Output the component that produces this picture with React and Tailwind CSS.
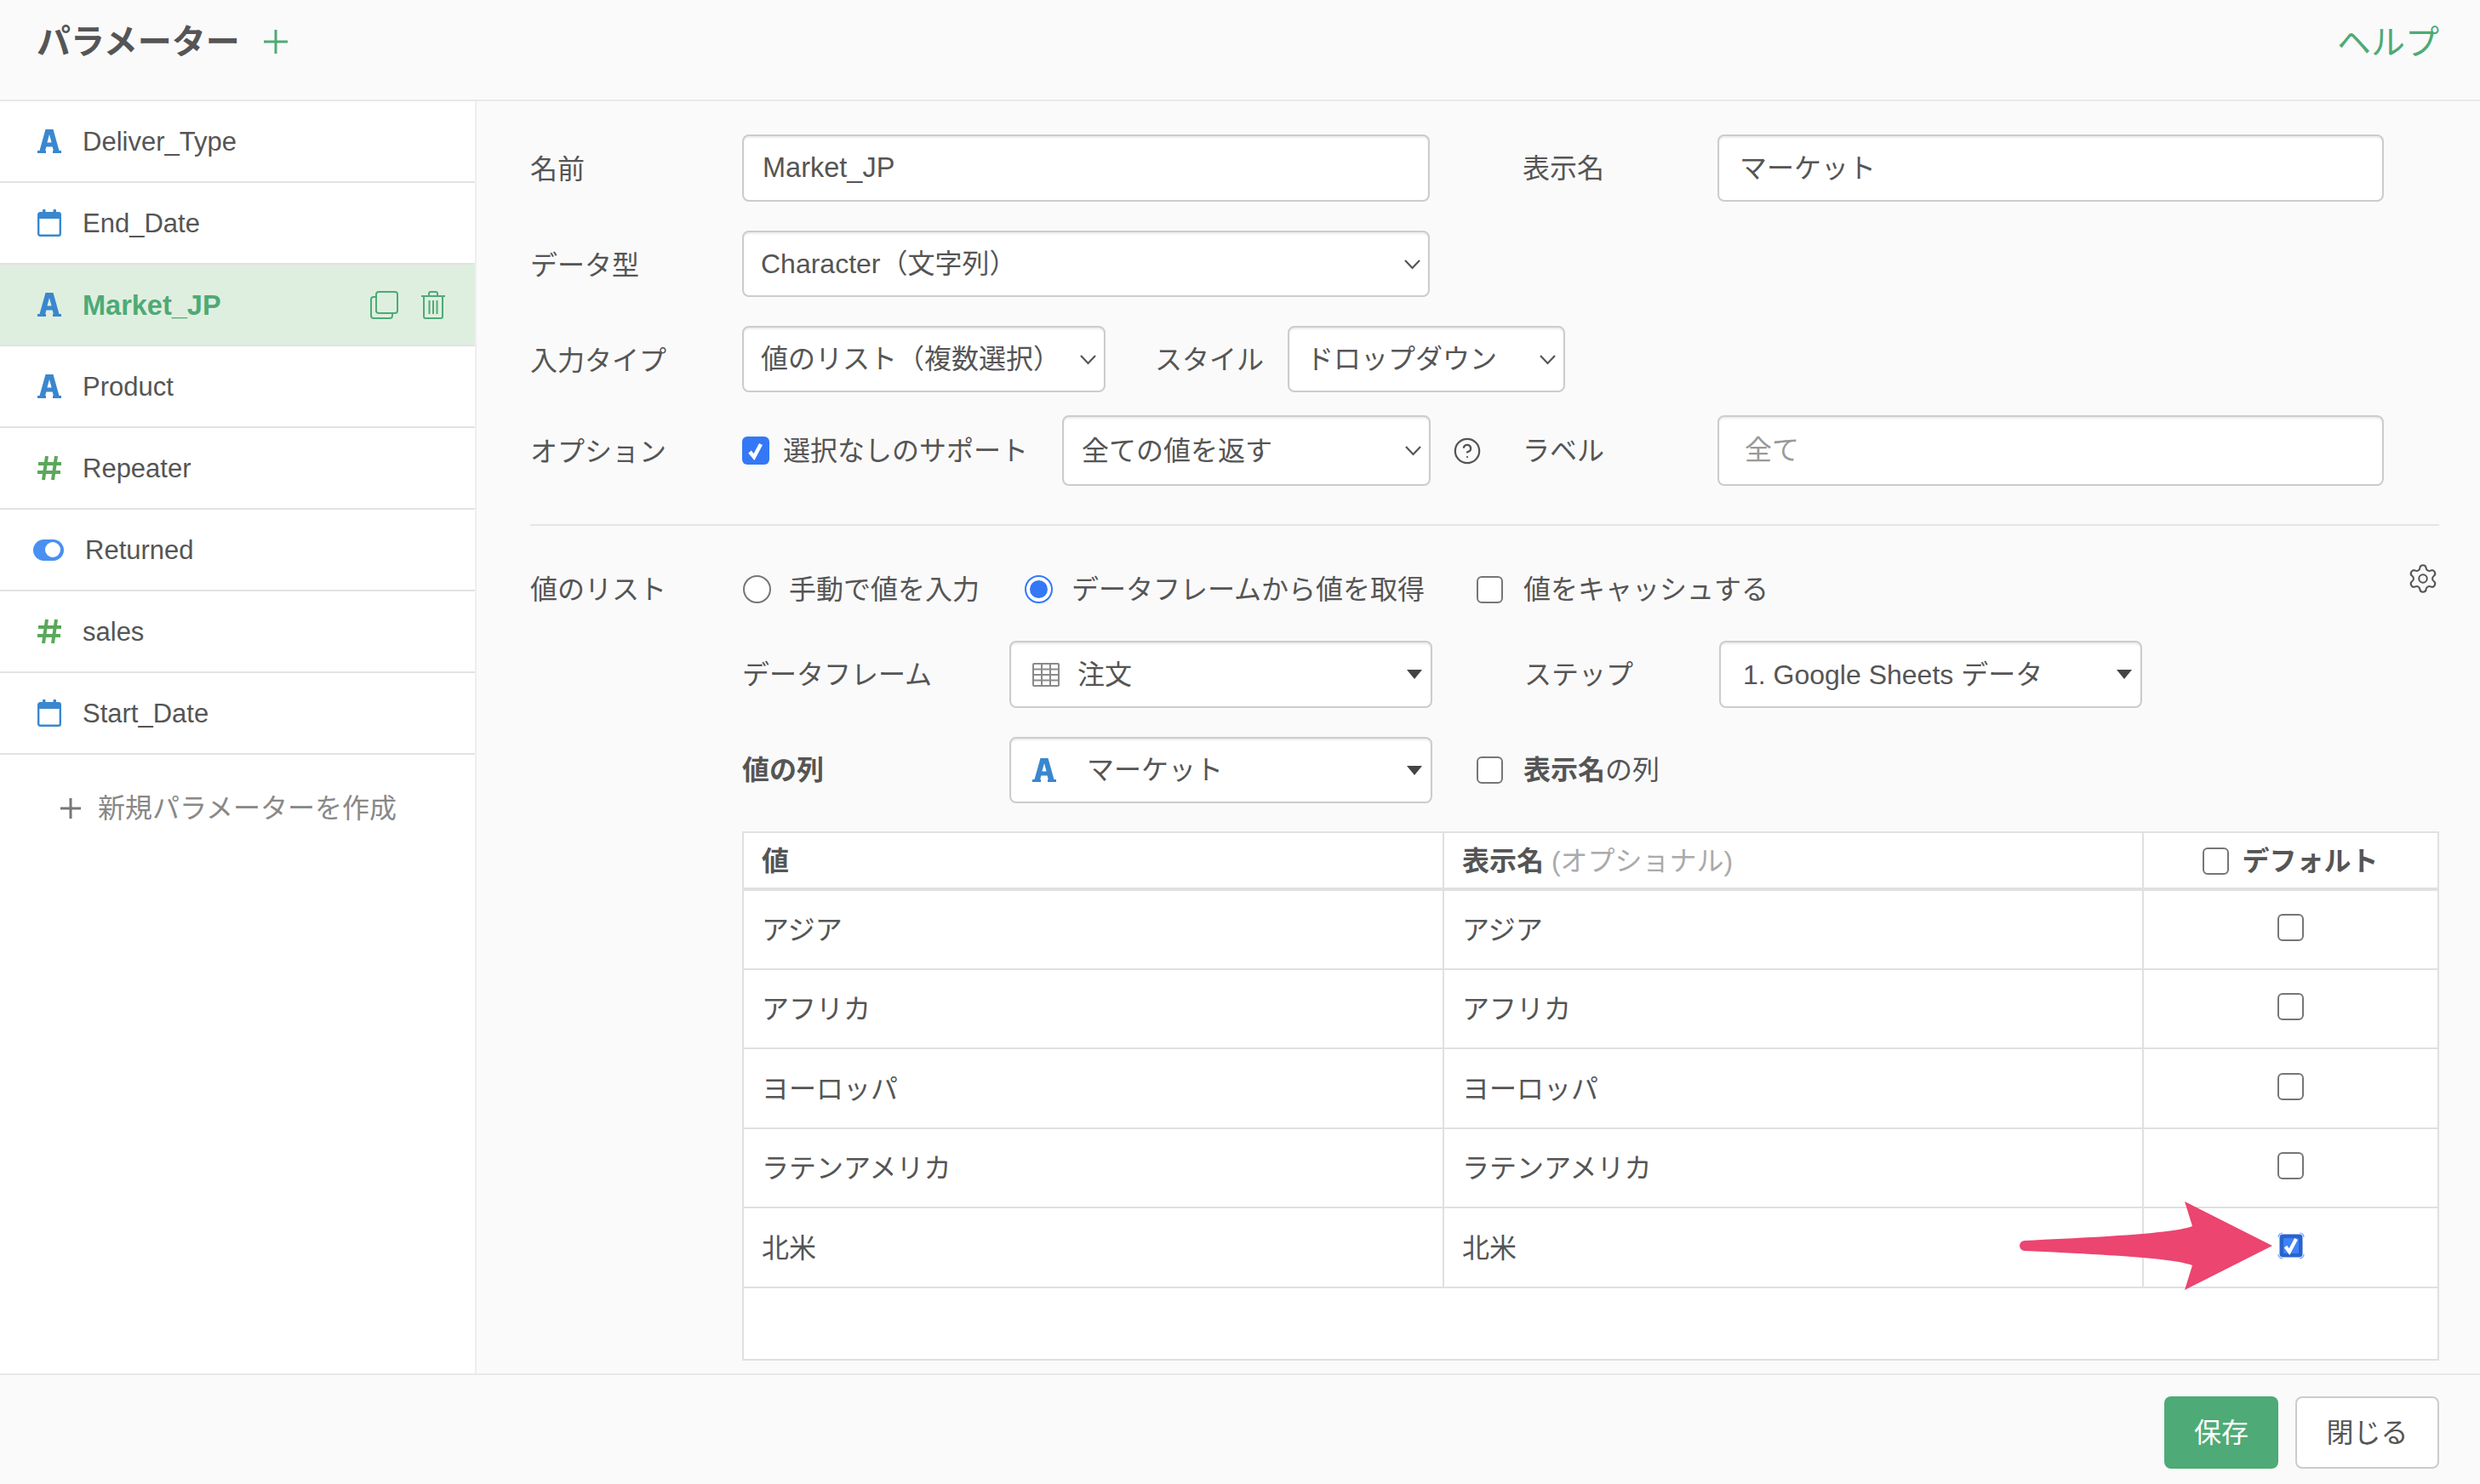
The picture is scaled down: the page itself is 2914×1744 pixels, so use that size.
import { Settings, CircleHelp } from 'lucide-react'

const params = [
  { name: 'Deliver_Type', type: 'text' },
  { name: 'End_Date', type: 'date' },
  { name: 'Market_JP', type: 'text', active: true },
  { name: 'Product', type: 'text' },
  { name: 'Repeater', type: 'num' },
  { name: 'Returned', type: 'bool' },
  { name: 'sales', type: 'num' },
  { name: 'Start_Date', type: 'date' },
]

const rows = ['アジア', 'アフリカ', 'ヨーロッパ', 'ラテンアメリカ', '北米']

function TextIcon({ className = '' }) {
  return (
    <svg width="28" height="28" viewBox="0 0 28 28" className={`shrink-0 ${className}`}>
      <path
        fillRule="evenodd"
        fill="#3a87cf"
        d="M9.500 0H18.500L25.500 25H28V28H18V25H18.800L17.600 20.500H10.400L9.200 25H10V28H0V25H2.500ZM14 6L11.400 15.500H16.600Z"
      />
    </svg>
  )
}

function DateIcon() {
  return (
    <svg width="28" height="32" viewBox="0 0 28 32" className="shrink-0">
      <rect x="1.200" y="4.200" width="25.600" height="26.600" rx="2" fill="none" stroke="#3a87cf" strokeWidth="2.400" />
      <rect x="1" y="4" width="26" height="7" fill="#3a87cf" />
      <rect x="6" y="0" width="3.500" height="6" rx="1" fill="#3a87cf" />
      <rect x="18.500" y="0" width="3.500" height="6" rx="1" fill="#3a87cf" />
    </svg>
  )
}

function NumIcon() {
  return (
    <svg width="28" height="30" viewBox="0 0 28 30" className="shrink-0">
      <g stroke="#5aa85a" strokeWidth="4" fill="none">
        <path d="M11 1L7 29" />
        <path d="M22 1L18 29" />
        <path d="M1 10H28" />
        <path d="M0 20H27" />
      </g>
    </svg>
  )
}

function BoolIcon() {
  return (
    <div className="w-[36px] h-[25px] rounded-full bg-[#4a90f0] flex items-center justify-end pr-[4px] shrink-0 -ml-[5px]">
      <div className="w-[18px] h-[18px] rounded-full bg-white" />
    </div>
  )
}

function CopyIcon() {
  return (
    <svg width="33" height="33" viewBox="0 0 33 33" fill="none" stroke="#4eaa76" strokeWidth="2">
      <rect x="7" y="1" width="25" height="25" rx="3" />
      <path d="M7 7H4a3 3 0 0 0-3 3v19a3 3 0 0 0 3 3h19a3 3 0 0 0 3-3v-3" />
    </svg>
  )
}

function TrashIcon() {
  return (
    <svg width="28" height="33" viewBox="0 0 28 33" fill="none" stroke="#4eaa76" strokeWidth="2">
      <path d="M0 6H28" />
      <path d="M9 6V3a2 2 0 0 1 2-2h6a2 2 0 0 1 2 2v3" />
      <path d="M3 6V30a2 2 0 0 0 2 2h18a2 2 0 0 0 2-2V6" />
      <path d="M9.500 11V27M14 11V27M18.500 11V27" />
    </svg>
  )
}

function TableIcon() {
  return (
    <svg width="32" height="28" viewBox="0 0 32 28" fill="none" stroke="#8a8a8a" strokeWidth="2" className="shrink-0">
      <rect x="1" y="1" width="30" height="26" rx="1" />
      <path d="M11 1V27M21 1V27M1 7.500H31M1 14H31M1 20.500H31" />
    </svg>
  )
}

function Chevron() {
  return (
    <svg width="21" height="13" viewBox="0 0 21 13" fill="none" stroke="#555" strokeWidth="2.200" className="shrink-0">
      <path d="M2 2L10.500 11L19 2" />
    </svg>
  )
}

function Caret() {
  return (
    <svg width="18" height="11" viewBox="0 0 18 11" className="shrink-0">
      <path d="M0 0H18L9 11Z" fill="#444" />
    </svg>
  )
}

function Check({ checked }) {
  if (checked) {
    return (
      <div className="w-[32px] h-[33px] rounded-[6px] bg-[#3478f6] flex items-center justify-center shrink-0">
        <svg width="20" height="22" viewBox="0 0 20 22" fill="none" stroke="#fff" strokeWidth="4.500">
          <path d="M3 12L8 18L16 3" />
        </svg>
      </div>
    )
  }
  return <div className="w-[31px] h-[32px] rounded-[6px] border-2 border-[#767676] bg-white shrink-0" />
}

function FocusedCheck() {
  return (
    <svg width="32" height="32" viewBox="0 0 32 32" fill="none">
      <path
        d="M1 6a5 5 0 0 1 5-5M26 1a5 5 0 0 1 5 5M31 26a5 5 0 0 1-5 5M6 31a5 5 0 0 1-5-5"
        stroke="#6aa5ff"
        strokeWidth="1.200"
      />
      <rect x="2.500" y="2.500" width="27" height="27" rx="4" fill="#2a63cc" />
      <rect x="7" y="7" width="18" height="18" rx="1" fill="#3f82fa" />
      <path d="M9.500 17L14 23L22 8" stroke="#fff" strokeWidth="4.200" />
    </svg>
  )
}

function Radio({ checked }) {
  return (
    <div
      className={`w-[33px] h-[33px] rounded-full border-2 flex items-center justify-center bg-white shrink-0 ${
        checked ? 'border-[#3478f6]' : 'border-[#767676]'
      }`}
    >
      {checked && <div className="w-[21px] h-[21px] rounded-full bg-[#3478f6]" />}
    </div>
  )
}

function Select({ className = '', text, pad = 'pl-[20px]', icon = <Chevron />, right = 'pr-[8px]', children }) {
  return (
    <div
      className={`flex items-center justify-between bg-white border-2 border-[#ccc] rounded-[8px] shadow-[inset_0_2px_2px_rgba(0,0,0,0.08)] shrink-0 ${pad} ${right} ${className}`}
    >
      <div className="flex items-center">
        {children}
        <span>{text}</span>
      </div>
      {icon}
    </div>
  )
}

function Field({ className = '', value, placeholder, pad = 'px-[22px]' }) {
  return (
    <input
      readOnly
      value={value}
      placeholder={placeholder}
      className={`bg-white border-2 border-[#ccc] rounded-[8px] shadow-[inset_0_2px_2px_rgba(0,0,0,0.08)] shrink-0 outline-none text-[#555] placeholder:text-[#999] ${pad} ${className}`}
    />
  )
}

function Sidebar() {
  return (
    <aside className="w-[560px] shrink-0 bg-white border-r-2 border-[#eee]">
      {params.map((p) => (
        <div
          key={p.name}
          className={`h-[96px] flex items-center pl-[44px] pr-[35px] border-b-2 border-[#e2e2e2] ${
            p.active ? 'bg-[#dfefdf]' : ''
          }`}
        >
          <div className={p.type === 'bool' ? 'w-[56px]' : 'w-[53px]'}>
            {p.type === 'text' && <TextIcon />}
            {p.type === 'date' && <DateIcon />}
            {p.type === 'num' && <NumIcon />}
            {p.type === 'bool' && <BoolIcon />}
          </div>
          <span className={`pt-[2px] ${p.active ? 'text-[32.5px] font-bold text-[#4eaa76]' : 'text-[31px] text-[#555]'}`}>
            {p.name}
          </span>
          {p.active && (
            <div className="ml-auto flex items-center gap-[27px]">
              <CopyIcon />
              <TrashIcon />
            </div>
          )}
        </div>
      ))}
      <div className="flex items-center pl-[71px] mt-[39px] text-[32px] text-[#888]">
        <svg width="24" height="24" viewBox="0 0 24 24" stroke="#777" strokeWidth="3" className="shrink-0">
          <path d="M12 0V24M0 12H24" />
        </svg>
        <span className="ml-[20px]">新規パラメーターを作成</span>
      </div>
    </aside>
  )
}

function ValueTable() {
  return (
    <div className="relative mt-[33px] ml-[249px] w-[1994px] h-[622px] bg-white border-2 border-[#e0e0e0]">
      <table className="w-full table-fixed border-collapse">
        <thead>
          <tr className="h-[66px]">
            <th className="w-[822px] pl-[21px] pt-[2px] text-left font-bold border-r-2 border-b-4 border-[#e0e0e0]">値</th>
            <th className="w-[822px] pl-[21px] pt-[2px] text-left font-bold border-r-2 border-b-4 border-[#e0e0e0]">
              表示名 <span className="font-normal text-[#aaa]">(オプショナル)</span>
            </th>
            <th className="pt-[2px] border-b-4 border-[#e0e0e0] font-bold">
              <div className="flex items-center justify-center gap-[15px]">
                <Check />
                デフォルト
              </div>
            </th>
          </tr>
        </thead>
        <tbody>
          {rows.map((r, i) => (
            <tr key={r} className="h-[93.500px]">
              <td className="pl-[21px] pt-[2px] border-r-2 border-b-2 border-[#e0e0e0]">{r}</td>
              <td className="pl-[21px] pt-[2px] border-r-2 border-b-2 border-[#e0e0e0]">{r}</td>
              <td className="border-b-2 border-[#e0e0e0]">
                <div className="flex justify-center -mt-[4px]">{i === 4 ? <FocusedCheck /> : <Check />}</div>
              </td>
            </tr>
          ))}
        </tbody>
      </table>
      {/* annotation arrow */}
      <svg
        width="297"
        height="104"
        viewBox="0 0 297 104"
        className="absolute left-[1499px] top-[433px]"
      >
        <path
          fill="#eb4570"
          d="M6 46C90 42 180 38 203 29L194 0L297 52L194 104L203 75C180 66 90 62 6 58A6 6 0 0 1 6 46Z"
        />
      </svg>
    </div>
  )
}

export default function App() {
  return (
    <div
      className="w-[2914px] h-[1744px] flex flex-col bg-[#fafafa] text-[#555] text-[32px] overflow-hidden"
      style={{ fontFamily: '"Liberation Sans", "Noto Sans CJK JP", sans-serif' }}
    >
      {/* Header */}
      <header className="h-[119px] shrink-0 flex items-start justify-between pl-[43px] pr-[48px] pt-[25px] border-b-2 border-[#e8e8e8]">
        <div className="flex items-center">
          <h1 className="text-[40px] font-bold text-[#555] leading-[48px]">パラメーター</h1>
          <svg width="28" height="28" viewBox="0 0 28 28" stroke="#4eaa76" strokeWidth="3" className="ml-[28px]">
            <path d="M14 0V28M0 14H28" />
          </svg>
        </div>
        <span className="text-[40px] text-[#4eaa76] leading-[50px]">ヘルプ</span>
      </header>

      <div className="flex-1 min-h-0 flex">
        <Sidebar />

        {/* Form */}
        <main className="flex-1 min-w-0 pl-[63px] pr-[48px] pt-[39px]">
          <div className="flex items-center h-[79px]">
            <label className="w-[249px] shrink-0 pt-[2px]">名前</label>
            <Field value="Market_JP" className="w-[808px] h-full text-[32.5px]" />
            <label className="ml-[109px] w-[229px] shrink-0">表示名</label>
            <Field value="マーケット" pad="pl-[24px] pb-[5px]" className="w-[783px] h-full" />
          </div>

          <div className="flex items-center h-[78px] mt-[34px]">
            <label className="w-[249px] shrink-0 pt-[3px]">データ型</label>
            <Select text="Character（文字列）" className="w-[808px] h-full" />
          </div>

          <div className="flex items-center h-[78px] mt-[34px]">
            <label className="w-[249px] shrink-0 pt-[3px]">入力タイプ</label>
            <Select text="値のリスト（複数選択）" className="w-[427px] h-full" />
            <label className="ml-[58px] w-[156px] shrink-0 pt-[2px]">スタイル</label>
            <Select text="ドロップダウン" className="w-[326px] h-full" />
          </div>

          <div className="flex items-center h-[83px] mt-[27px]">
            <label className="w-[249px] shrink-0 pt-[2px]">オプション</label>
            <Check checked />
            <span className="ml-[16px] w-[328px] shrink-0">選択なしのサポート</span>
            <Select text="全ての値を返す" pad="pl-[21px]" className="w-[433px] h-full" />
            <CircleHelp size={34} strokeWidth={1.600} className="ml-[26px] shrink-0 text-[#555]" />
            <label className="ml-[48px] w-[229px] shrink-0">ラベル</label>
            <Field placeholder="全て" pad="px-[30px]" className="w-[783px] h-full" />
          </div>

          <div className="h-[2px] bg-[#e4e4e4] mt-[45px]" />

          <div className="flex items-center h-[33px] mt-[58px]">
            <label className="w-[250px] shrink-0">値のリスト</label>
            <Radio />
            <span className="ml-[21px]">手動で値を入力</span>
            <div className="ml-[53px]">
              <Radio checked />
            </div>
            <span className="ml-[22px]">データフレームから値を取得</span>
            <div className="ml-[61px]">
              <Check />
            </div>
            <span className="ml-[24px]">値をキャッシュする</span>
            <Settings size={38} strokeWidth={1.300} className="ml-auto -mt-[26px] text-[#555]" />
          </div>

          <div className="flex items-center h-[79px] mt-[44px] pl-[249px]">
            <label className="w-[314px] shrink-0">データフレーム</label>
            <Select text="注文" icon={<Caret />} right="pr-[10px]" pad="pl-[25px]" className="w-[497px] h-full">
              <TableIcon />
              <span className="w-[21px]" />
            </Select>
            <label className="ml-[108px] w-[229px] shrink-0">ステップ</label>
            <Select text="1. Google Sheets データ" icon={<Caret />} right="pr-[10px]" pad="pl-[26px]" className="w-[497px] h-full" />
          </div>

          <div className="flex items-center h-[78px] mt-[34px] pl-[249px]">
            <label className="w-[314px] shrink-0 font-bold">値の列</label>
            <Select text="マーケット" icon={<Caret />} right="pr-[10px]" pad="pl-[25px]" className="w-[497px] h-full">
              <TextIcon />
              <span className="w-[36px]" />
            </Select>
            <div className="ml-[52px]">
              <Check />
            </div>
            <span className="ml-[24px]">
              <b>表示名</b>の列
            </span>
          </div>

          <ValueTable />
        </main>
      </div>

      {/* Footer */}
      <footer className="h-[130px] shrink-0 flex justify-end pr-[48px] pt-[25px] gap-[20px] border-t-2 border-[#e8e8e8]">
        <button className="w-[134px] h-[85px] rounded-[8px] bg-[#4eaa76] text-white">保存</button>
        <button className="w-[169px] h-[85px] rounded-[8px] bg-white border-2 border-[#ccc] text-[#555]">閉じる</button>
      </footer>
    </div>
  )
}
